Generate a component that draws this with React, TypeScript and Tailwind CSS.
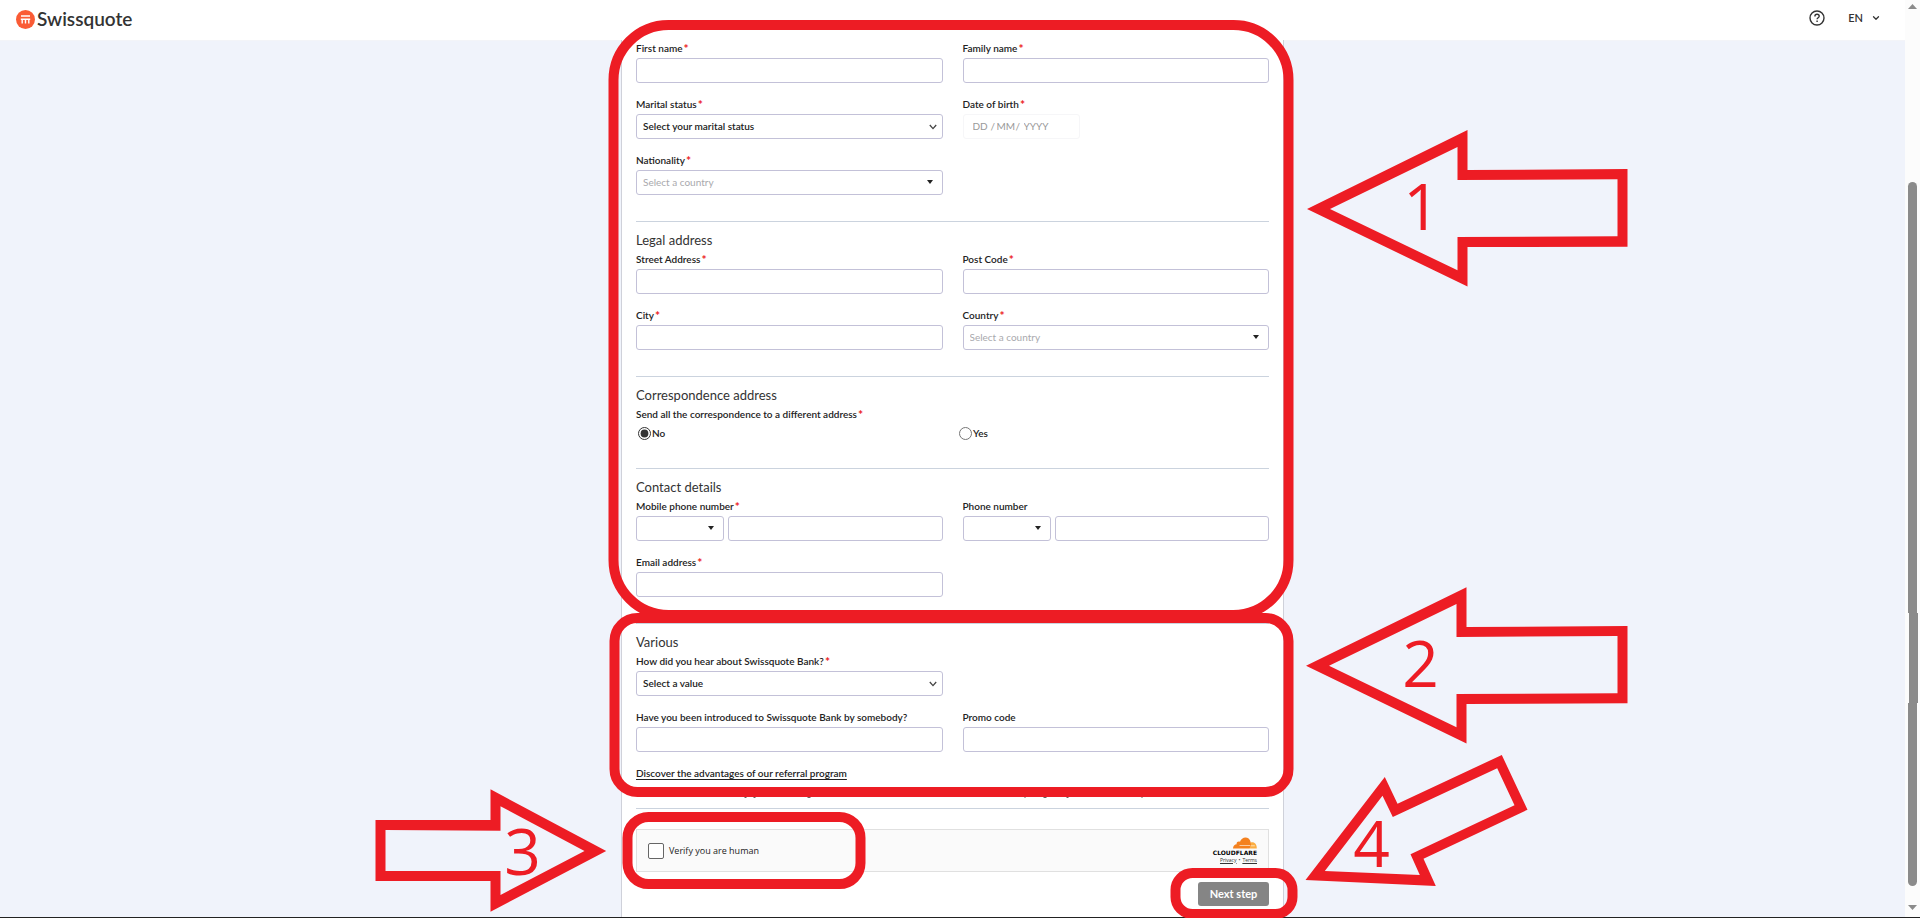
import type { ReactNode } from "react";
import { ChevronDown } from "lucide-react";

const boxClass =
  "block h-[25px] w-full min-w-0 rounded-[3px] border border-[#c3c1d8] bg-white px-1.5 text-[10px] text-[#222] outline-none";

function Label({ id, text, required }: { id?: string; text: string; required?: boolean }) {
  return (
    <label htmlFor={id} className="flex h-4 text-[10px] leading-4 font-semibold whitespace-nowrap text-[#222]">
      {text}
      {required && <span className="ml-px text-[12px] leading-[18px] font-bold text-[#ec1c24]">*</span>}
    </label>
  );
}

function Field({ id, text, required, children }: { id: string; text: string; required?: boolean; children?: ReactNode }) {
  return (
    <div className="flex min-w-0 flex-col gap-0.5">
      <Label id={id} text={text} required={required} />
      {children ?? <input id={id} type="text" className={boxClass} />}
    </div>
  );
}

function Select({ id, value, label, kind }: { id: string; value: string; label?: string; kind: "chevron" | "caret" }) {
  return (
    <div className="relative w-full">
      <select
        id={id}
        aria-label={label}
        className={
          kind === "chevron"
            ? `${boxClass} appearance-none font-semibold`
            : `${boxClass} appearance-none text-[#a9a9ad]`
        }
      >
        <option>{value}</option>
      </select>
      {kind === "chevron" ? (
        <svg viewBox="0 0 8 6" className="pointer-events-none absolute top-[10px] right-[6px] h-1.5 w-2">
          <path d="M.8 1 4 4.6 7.2 1" fill="none" stroke="#444" strokeWidth="1.3" />
        </svg>
      ) : (
        <svg viewBox="0 0 6 4" className="pointer-events-none absolute top-[10px] right-[10px] h-1 w-1.5">
          <path d="M0 0h6L3 4z" fill="#222" />
        </svg>
      )}
    </div>
  );
}

function Section({ title, children }: { title: string; children: ReactNode }) {
  return (
    <section className="border-t border-[#cbd3de] pt-2">
      <h2 className="mb-px text-[13px] leading-5 text-[#333]">{title}</h2>
      {children}
    </section>
  );
}

const gridClass = "grid grid-cols-2 gap-x-5 gap-y-[13px]";

function Phone({ id, name }: { id: string; name: string }) {
  return (
    <div className="flex gap-1">
      <div className="w-[88px] shrink-0">
        <Select id={`${id}-prefix`} label={`${name} prefix`} value="" kind="caret" />
      </div>
      <input id={id} type="tel" className={boxClass} />
    </div>
  );
}

function Header() {
  return (
    <header className="flex h-[41px] items-start justify-between border-b border-[#f3f4f8] bg-white pt-[7px] pr-6 pl-4">
      <a href="#home" className="flex items-center gap-0.5 text-[#333]">
        <svg viewBox="0 0 19 19" className="h-[19px] w-[19px]">
          <circle cx="9.5" cy="9.5" r="9.5" fill="#fa5b35" />
          <path
            d="M5 6h9M4.800 9.200h9.400M6.200 13.600V9.500M9.500 13.600V9.500M12.800 13.600V9.500"
            fill="none"
            stroke="#fff"
            strokeWidth="1.4"
          />
        </svg>
        <span className="text-[19px] leading-6 font-semibold">Swissquote</span>
      </a>
      <div className="flex h-[22px] items-center">
        <button type="button" aria-label="Help" className="mr-[22px]">
          <svg viewBox="0 0 18 18" className="h-[18px] w-[18px]" fill="none" stroke="#333" strokeWidth="1.4">
            <circle cx="9" cy="9" r="7" />
            <path d="M6.9 7.4c0-2.9 4.3-2.7 4.3-.2 0 1.5-2.1 1.6-2.1 3.1M9.1 11.6v1.5" />
          </svg>
        </button>
        <button type="button" className="flex items-center gap-2 text-[11px] font-semibold text-[#333]">
          EN
          <ChevronDown size={10} strokeWidth={3} />
        </button>
      </div>
    </header>
  );
}

function Verification() {
  return (
    <div className="flex h-[43px] items-center justify-between border border-[#e0e0e0] bg-[#fafafa] pr-[11px] pl-[11px]">
      <label className="flex items-center gap-[5px] font-['Open_Sans',sans-serif] text-[9px] text-[#232323]">
        <input type="checkbox" className="h-4 w-4 appearance-none rounded-[2px] border border-[#666] bg-white" />
        Verify you are human
      </label>
      <div className="flex flex-col items-end">
        <svg viewBox="0 0 24 12" className="h-3 w-6">
          <path d="M0 11.5C0 8.8 1.7 7.4 3.7 7.3 3 5 5.500 3.700 7 4.800 8.600-.8 16.200-1.400 17.600 5L18.500 8.500 16.500 11.500z" fill="#f4811f" />
          <path d="M16.500 11.500 18 8.200 17.700 5.500C21.500 4.500 24 7.500 23.800 11.500z" fill="#fbad41" />
          <path d="M6.500 8.500h10.800M17.800 8.800h4" stroke="#fff" strokeWidth=".6" />
        </svg>
        <span className="font-['DejaVu_Sans',sans-serif] text-[6px] leading-[7px] font-bold text-black">CLOUDFLARE</span>
        <div className="flex gap-0.5 font-['Open_Sans',sans-serif] text-[5px] leading-[9px] text-[#333]">
          <a href="#privacy" className="underline">Privacy</a>
          <span>•</span>
          <a href="#terms" className="underline">Terms</a>
        </div>
      </div>
    </div>
  );
}

function Form() {
  return (
    <form className="mx-auto -mt-px w-full max-w-[663px] border-x border-[#cfd1da] bg-white px-3.5 pb-[11px]">
      <div className={`${gridClass} pb-[26px]`}>
        <Field id="first" text="First name" required />
        <Field id="family" text="Family name" required />
        <Field id="marital" text="Marital status" required>
          <Select id="marital" value="Select your marital status" kind="chevron" />
        </Field>
        <Field id="day" text="Date of birth" required>
          <div className="flex h-[25px] w-[117px] items-center rounded-[3px] border border-[#f6f6f8] pl-[9px] text-[10px] text-[#999]">
            <input id="day" placeholder="DD" className="w-[18px] placeholder:text-[#999]" />
            <span className="w-1.5">/</span>
            <input aria-label="Month" placeholder="MM" className="w-[19px] placeholder:text-[#999]" />
            <span className="w-2">/</span>
            <input aria-label="Year" placeholder="YYYY" className="w-8 placeholder:text-[#999]" />
          </div>
        </Field>
        <Field id="nationality" text="Nationality" required>
          <Select id="nationality" value="Select a country" kind="caret" />
        </Field>
      </div>

      <Section title="Legal address">
        <div className={`${gridClass} pb-[26px]`}>
          <Field id="street" text="Street Address" required />
          <Field id="post" text="Post Code" required />
          <Field id="city" text="City" required />
          <Field id="country" text="Country" required>
            <Select id="country" value="Select a country" kind="caret" />
          </Field>
        </div>
      </Section>

      <Section title="Correspondence address">
        <fieldset className="pb-[27px]">
          <legend className="block">
            <Label text="Send all the correspondence to a different address" required />
          </legend>
          <div className="mt-[3px] flex h-4 items-center pl-0.5 text-[10px] font-semibold text-[#222]">
            <label className="flex w-[321px] items-center gap-px">
              <input type="radio" name="different" defaultChecked className="h-[13px] w-[13px] accent-[#333]" />
              No
            </label>
            <label className="flex items-center gap-px">
              <input type="radio" name="different" className="h-[13px] w-[13px] accent-[#333]" />
              Yes
            </label>
          </div>
        </fieldset>
      </Section>

      <Section title="Contact details">
        <div className={`${gridClass} pb-[26px]`}>
          <Field id="mobile" text="Mobile phone number" required>
            <Phone id="mobile" name="Mobile phone" />
          </Field>
          <Field id="phone" text="Phone number">
            <Phone id="phone" name="Phone" />
          </Field>
          <Field id="email" text="Email address" required />
        </div>
      </Section>

      <Section title="Various">
        <div className={gridClass}>
          <div className="col-span-2 grid grid-cols-2 gap-x-5">
            <Field id="hear" text="How did you hear about Swissquote Bank?" required>
              <Select id="hear" value="Select a value" kind="chevron" />
            </Field>
          </div>
          <Field id="introduced" text="Have you been introduced to Swissquote Bank by somebody?" />
          <Field id="promo" text="Promo code" />
        </div>
        <a
          href="#referral"
          className="mt-[13px] block w-fit text-[10px] leading-4 font-semibold text-[#222] underline underline-offset-2"
        >
          Discover the advantages of our referral program
        </a>
      </Section>

      <div className="mt-[27px] border-t border-[#cbd3de] pt-5">
        <Verification />
        <div className="mt-2.5 flex justify-end">
          <button type="submit" className="h-6 w-[71px] rounded-[3px] bg-[#858585] text-[11px] font-bold text-white">
            Next step
          </button>
        </div>
      </div>
    </form>
  );
}

function Annotations() {
  return (
    <svg
      viewBox="0 0 1905 918"
      className="pointer-events-none absolute top-0 left-1/2 h-[918px] w-[1905px] -translate-x-1/2"
    >
      <path d="M744 797.500h2M753 797.500h2M807 797.500h3M1024 797.500h1M1043 797.500h3M1066 797.500h2M1141 797.500h1" stroke="#666" />
      <g fill="none" stroke="#ed1c24" strokeWidth="10">
        <rect x="613" y="25" width="675" height="590" rx="55" />
        <rect x="614" y="618" width="674" height="174" rx="23" />
        <rect x="627" y="817" width="233" height="67" rx="21" />
        <rect x="1175" y="873" width="117" height="41" rx="17" />
      </g>
      <g fill="#ed1c24" fillRule="evenodd">
        <path d="M1306.500 209 1467 130V170L1627 169V246.700L1467 247V286.500zM1329.500 209 1457 270.300V237L1617 236.300V179.300L1457 180V147z" />
        <path d="M1305.500 665.700 1466 587.300V627L1627 626V703.300L1466 704V743.500zM1328.500 665.700 1456 727.300V694L1617 693.300V636L1456 637V604z" />
        <path d="M375 820H490V789.300L605.700 851 490 911.700V881H375zM385 830V871H500V895L584 851 500 806.300V830.700z" />
        <path d="M1305 880 1384.300 777 1397 803.700 1501.300 755 1527 809.700 1423 858.700 1435.300 886zM1324.300 871 1419.300 875 1410 854.300 1514 805.300 1496.700 768.300 1392.300 817 1382 795.700z" />
      </g>
      <g fill="#ed1c24" textAnchor="middle" className="font-['Open_Sans',sans-serif] text-[64px]">
        <text x="1421" y="230">1</text>
        <text x="1420" y="687">2</text>
        <text x="522" y="875">3</text>
        <text x="1371" y="867">4</text>
      </g>
    </svg>
  );
}

function Scrollbar() {
  return (
    <div aria-hidden="true" className="flex w-[15px] shrink-0 flex-col items-center bg-[#fcfcfc] pt-1 pb-[7px]">
      <svg viewBox="0 0 9 5" className="h-[5px] w-[9px]">
        <path d="M0 5h9L4.500 0z" fill="#8b8b8b" />
      </svg>
      <div className="mt-[173px] mb-[19px] flex w-[9px] flex-1 flex-col">
        <div className="h-[431px] rounded-t-full bg-[#8b8b8b]" />
        <div className="ml-px h-[90px] w-[9px] bg-[#8b8b8b]" />
        <div className="flex-1 rounded-b-full bg-[#8b8b8b]" />
      </div>
      <svg viewBox="0 0 9 5" className="h-[5px] w-[9px]">
        <path d="M0 0h9L4.500 5z" fill="#8b8b8b" />
      </svg>
    </div>
  );
}

export default function App() {
  return (
    <div className="relative flex min-h-screen flex-col overflow-hidden bg-[#f0f3fb] font-['Lato',sans-serif]">
      <div className="flex flex-1">
        <div className="relative flex min-w-0 flex-1 flex-col">
          <Header />
          <main className="flex flex-1 flex-col">
            <Form />
          </main>
          <Annotations />
        </div>
        <Scrollbar />
      </div>
      <div className="h-px bg-[#222]" />
    </div>
  );
}
